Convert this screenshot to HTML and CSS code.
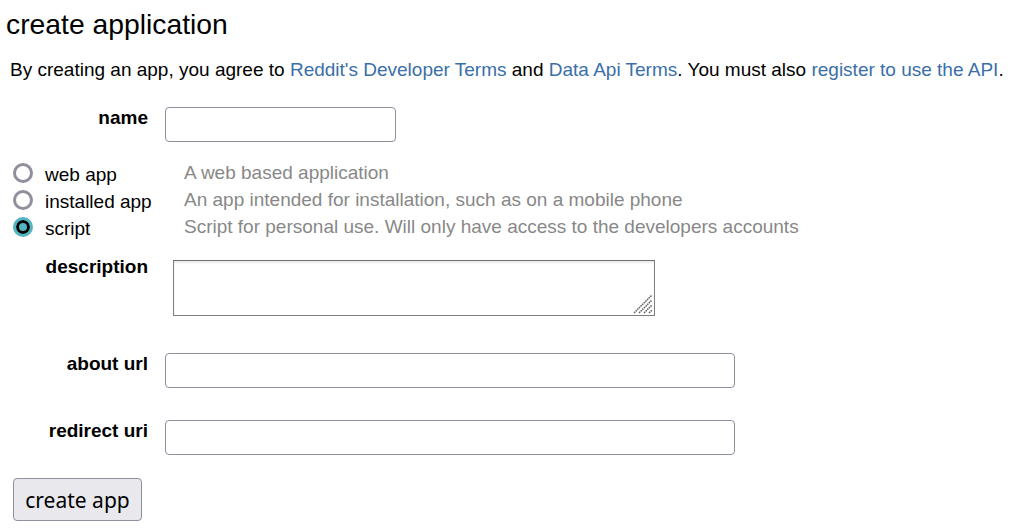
FILE: index.html
```html
<!DOCTYPE html>
<html>
<head>
<meta charset="utf-8">
<link rel="stylesheet" href="styles.css">
</head>
<body>
<h1 class="title">create application</h1>
<p class="intro">By creating an app, you agree to <a href="#">Reddit's Developer Terms</a> and <a href="#">Data Api Terms</a>. You must also <a href="#">register to use the API</a>.</p>
<form class="form">
  <div class="field field-name">
    <label class="label">name</label>
    <input class="text text-short" type="text">
  </div>
  <div class="types">
    <div class="type-row">
      <input class="radio" type="radio" name="t">
      <span class="type-label">web app</span>
      <span class="type-desc">A web based application</span>
    </div>
    <div class="type-row">
      <input class="radio" type="radio" name="t">
      <span class="type-label">installed app</span>
      <span class="type-desc">An app intended for installation, such as on a mobile phone</span>
    </div>
    <div class="type-row">
      <input class="radio" type="radio" name="t" checked>
      <span class="type-label">script</span>
      <span class="type-desc">Script for personal use. Will only have access to the developers accounts</span>
    </div>
  </div>
  <div class="field field-desc">
    <label class="label">description</label>
    <span class="area-wrap">
      <textarea class="area"></textarea>
      <svg class="grip" width="20" height="20" viewBox="0 0 20 20">
        <g stroke="#666" stroke-width="1.5" stroke-dasharray="1.6 0.7">
          <line x1="1" y1="19" x2="19" y2="1"/>
          <line x1="6" y1="19" x2="19" y2="6"/>
          <line x1="11" y1="19" x2="19" y2="11"/>
          <line x1="16" y1="19" x2="19" y2="16"/>
        </g>
      </svg>
    </span>
  </div>
  <div class="field field-about">
    <label class="label">about url</label>
    <input class="text text-long" type="text">
  </div>
  <div class="field field-redirect">
    <label class="label">redirect uri</label>
    <input class="text text-long" type="text">
  </div>
  <button class="submit" type="button">create app</button>
</form>
</body>
</html>
```

FILE: styles.css
```css
html, body {
  margin: 0;
  padding: 0;
  background: #fff;
}
body {
  font-family: "Liberation Sans", Arial, sans-serif;
  font-size: 19px;
  color: #000;
}
.title {
  margin: 0;
  padding: 9px 0 0 6px;
  font-size: 28.3px;
  line-height: 30px;
  font-weight: normal;
  color: #000;
}
.intro {
  margin: 20px 0 0 0;
  padding-left: 10px;
  line-height: 22px;
  color: #000;
}
.intro a {
  color: #3a6fa8;
  text-decoration: none;
}
.form {
  display: flex;
  flex-direction: column;
  align-items: flex-start;
}
.field {
  display: flex;
  align-items: flex-start;
}
.label {
  width: 148px;
  text-align: right;
  font-weight: bold;
  line-height: 22px;
  margin-right: 17px;
  color: #000;
}
.field-name {
  margin-top: 26px;
}
.text {
  box-sizing: border-box;
  height: 35px;
  border: 1px solid #8f8f9d;
  border-radius: 4px;
  background: #fff;
  margin: 0;
  padding: 0 6px;
  font: inherit;
}
.text-short {
  width: 231px;
}
.text-long {
  width: 570px;
}
.types {
  margin-top: 20px;
  display: flex;
  flex-direction: column;
}
.type-row {
  display: flex;
  align-items: flex-start;
  height: 27px;
  padding-left: 13px;
}
.radio {
  appearance: none;
  -webkit-appearance: none;
  box-sizing: border-box;
  width: 20px;
  height: 20px;
  margin: 1px 12px 0 0;
  border: 3px solid #8f8f9d;
  border-radius: 50%;
  background: #fff;
  flex: none;
}
.radio:checked {
  border-color: #52b5c1;
  background: #52b5c1;
  box-shadow: inset 0 0 0 3px #000;
}
.type-label {
  width: 139px;
  line-height: 25px;
  color: #000;
}
.type-desc {
  line-height: 22px;
  color: #888;
}
.field-desc {
  margin-top: 13px;
}
.area-wrap {
  position: relative;
  display: block;
  margin-top: 4px;
  margin-left: 8px;
  width: 482px;
  height: 56px;
}
.area {
  display: block;
  box-sizing: border-box;
  width: 482px;
  height: 56px;
  margin: 0;
  border: 1px solid #7f7f7f;
  border-top-color: #6f6f6f;
  box-shadow: inset 0 2px 2px rgba(0, 0, 0, 0.08);
  background: #fff;
  resize: none;
  font: inherit;
}
.grip {
  position: absolute;
  right: 2px;
  bottom: 2px;
}
.field-about {
  margin-top: 37px;
}
.field-redirect {
  margin-top: 32px;
}
.submit {
  margin: 23px 0 0 13px;
  box-sizing: border-box;
  width: 129px;
  height: 43px;
  padding: 0;
  border: 1px solid #8f8f9d;
  border-radius: 4px;
  background: #e9e9ed;
  font-family: "Noto Sans", "Open Sans", sans-serif;
  font-size: 21px;
  color: #000;
}
```
